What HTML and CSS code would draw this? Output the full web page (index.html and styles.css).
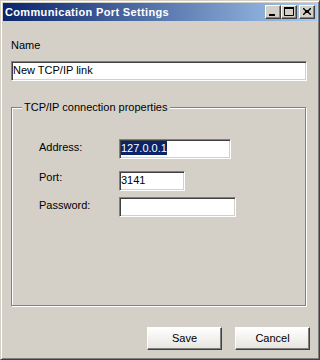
FILE: index.html
```html
<!DOCTYPE html>
<html>
<head>
<meta charset="utf-8">
<link rel="stylesheet" href="styles.css">
</head>
<body>
<div class="window">
  <div class="titlebar">
    <span class="title">Communication Port Settings</span>
    <div class="caption-buttons">
      <div class="cbtn"><svg width="14" height="12" viewBox="0 0 14 12"><rect x="3" y="8" width="6" height="2" fill="#000"/></svg></div>
      <div class="cbtn"><svg width="14" height="12" viewBox="0 0 14 12"><path d="M2.5 1.5h9v8h-9z M2 2h10" fill="none" stroke="#000" stroke-width="1"/><rect x="2" y="1" width="10" height="2" fill="#000"/></svg></div>
      <div class="cbtn close"><svg width="14" height="12" viewBox="0 0 14 12"><path d="M3 2l1 0 2 2 2 0 2 -2 1 0 0 1 -2 2 0 1 2 2 0 1 -1 0 -2 -2 -2 0 -2 2 -1 0 0 -1 2 -2 0 -1 -2 -2z" fill="#000"/></svg></div>
    </div>
  </div>
  <div class="content">
    <div class="label name-label">Name</div>
    <div class="field name-field">New TCP/IP link</div>
    <fieldset class="group">
      <legend class="group-title">TCP/IP connection properties</legend>
      <div class="row">
        <div class="label row-label">Address:</div>
        <div class="field address"><span class="sel">127.0.0.1</span></div>
      </div>
      <div class="row row-port">
        <div class="label row-label port-label">Port:</div>
        <div class="field port">3141</div>
      </div>
      <div class="row row-pass">
        <div class="label row-label">Password:</div>
        <div class="field password"></div>
      </div>
    </fieldset>
    <div class="actions">
      <div class="button">Save</div>
      <div class="button">Cancel</div>
    </div>
  </div>
</div>
</body>
</html>
```
FILE: styles.css
```css
html, body {
  margin: 0;
  padding: 0;
  background: #d4d0c8;
}
body {
  font-family: "Liberation Sans", Arial, sans-serif;
  font-size: 11px;
  color: #000;
}
.window {
  box-sizing: border-box;
  width: 320px;
  height: 360px;
  border: 1px solid;
  border-color: #d4d0c8 #404040 #404040 #d4d0c8;
  box-shadow: inset 1px 1px #fff, inset -1px -1px #808080;
  padding: 2px;
  background: #d4d0c8;
  display: flex;
  flex-direction: column;
}
.titlebar {
  height: 18px;
  background: linear-gradient(to right, #0a246a, #a6caf0);
  display: flex;
  align-items: center;
  justify-content: space-between;
  padding: 0 2px 0 2px;
}
.title {
  color: #fff;
  font-weight: bold;
  font-size: 11px;
  line-height: 14px;
  letter-spacing: 0.35px;
}
.caption-buttons {
  display: flex;
  gap: 0;
}
.cbtn {
  box-sizing: border-box;
  width: 16px;
  height: 14px;
  background: #d4d0c8;
  border: 1px solid;
  border-color: #fff #404040 #404040 #fff;
  box-shadow: inset -1px -1px #808080;
  display: flex;
}
.cbtn svg { display: block; }
.cbtn.close { margin-left: 2px; }
.content {
  flex: 1;
  display: flex;
  flex-direction: column;
  padding: 18px 9px 0 8px;
}
.label {
  line-height: 13px;
}
.field {
  box-sizing: border-box;
  height: 20px;
  background: #fff;
  border: 1px solid;
  border-color: #808080 #fff #fff #808080;
  box-shadow: inset 1px 1px #404040, inset -1px -1px #d4d0c8;
  padding: 1px 1px 0 1px;
  line-height: 14px;
  white-space: nowrap;
}
.name-field {
  margin-top: 9px;
  width: 296px;
}
.group {
  margin: 20px 0 0 0;
  width: 295px;
  box-sizing: border-box;
  border: 1px solid #808080;
  box-shadow: inset 1px 1px #fff, 1px 1px #fff;
  padding: 25px 0 88px 0;
  min-width: 0;
}
.group-title {
  margin-left: 10px;
  padding: 0 3px 0 2px;
  line-height: 13px;
  background: #d4d0c8;
}
.row {
  display: flex;
  align-items: flex-start;
}
.row-port { margin-top: 12px; }
.row-pass { margin-top: 6px; }
.row-label {
  width: 80px;
  margin-left: 27px;
  margin-top: 2px;
}
.port-label { margin-top: 0; }
.address { width: 112px; }
.port { width: 66px; }
.password { width: 117px; }
.sel {
  background: #0a246a;
  color: #fff;
  display: inline-block;
}
.actions {
  display: flex;
  justify-content: flex-end;
  gap: 13px;
  margin-top: 21px;
  margin-right: -2px;
}
.button {
  box-sizing: border-box;
  width: 75px;
  height: 23px;
  border: 1px solid;
  border-color: #fff #404040 #404040 #fff;
  box-shadow: inset -1px -1px #808080;
  background: linear-gradient(#ffffff, #e6e4de);
  display: flex;
  align-items: center;
  justify-content: center;
  line-height: 13px;
}
```
